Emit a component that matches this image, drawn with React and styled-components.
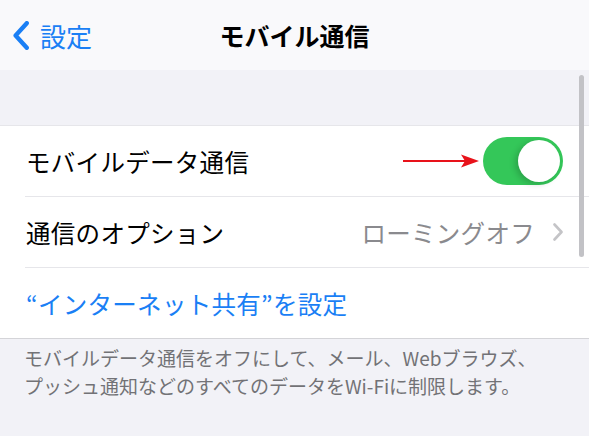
import React from 'react'
import styled, { createGlobalStyle } from 'styled-components'

const GlobalStyle = createGlobalStyle`
  html, body {
    margin: 0;
    padding: 0;
    background: #f2f2f7;
    font-family: "Noto Sans CJK JP", "Noto Sans", sans-serif;
  }
`

const Screen = styled.div`
  position: relative;
  width: 589px;
  height: 436px;
  overflow: hidden;
  background: #f2f2f7;
`

const NavBar = styled.div`
  height: 70px;
  background: #f9f9fb;
  display: grid;
  grid-template-columns: 1fr auto 1fr;
  align-items: center;
  padding: 0 13px;
`

const BackButton = styled.div`
  display: flex;
  align-items: center;
  gap: 11px;
  color: #1a7ff5;
  font-size: 26px;
`

const NavTitle = styled.div`
  font-size: 25px;
  font-weight: 700;
  color: #000;
`

const Spacer = styled.div`
  height: 55px;
`

const Group = styled.div`
  background: #fff;
  border-top: 1px solid #e6e6ea;
  border-bottom: 1px solid #d4d4d8;
`

const Row = styled.div`
  height: 70px;
  display: flex;
  align-items: center;
  padding: 0 26px 0 26px;

  & + & {
    border-top: 1px solid #e6e6ea;
    margin-left: 25px;
    padding-left: 1px;
  }
`

const Label = styled.div`
  flex: 1;
  font-size: 24.5px;
  color: ${p => (p.$link ? '#1a7ff5' : '#000')};
  letter-spacing: 0.3px;
`

const Detail = styled.div`
  font-size: 24.5px;
  color: #8a8a8e;
  margin-right: 18px;
  letter-spacing: 0.3px;
`

const Toggle = styled.div`
  width: 80px;
  height: 48px;
  border-radius: 24px;
  background: #34c759;
  position: relative;
  margin-left: 4px;
`

const Knob = styled.div`
  position: absolute;
  top: 3px;
  right: 3px;
  width: 42px;
  height: 42px;
  border-radius: 50%;
  background: #fff;
  box-shadow: -3px 2px 6px rgba(0, 0, 0, 0.18);
`

const Footer = styled.div`
  padding: 5px 24px 0 24px;
  font-size: 19px;
  line-height: 28px;
  color: #727276;
`

const ScrollBar = styled.div`
  position: absolute;
  right: 5px;
  top: 75px;
  width: 5px;
  height: 182px;
  border-radius: 3px;
  background: #c2c2c6;
`

const Chevron = ({ size = 30, color, width = 3 }) => (
  <svg width={size * 0.55} height={size} viewBox="0 0 11 20">
    <path d="M9.5 1.5 L1.8 10 L9.5 18.5" fill="none" stroke={color} strokeWidth={width} strokeLinecap="round" strokeLinejoin="round" />
  </svg>
)

const RightChevron = () => (
  <svg width="10" height="18" viewBox="0 0 10 18">
    <path d="M1.5 1.5 L8.5 9 L1.5 16.5" fill="none" stroke="#c4c4c7" strokeWidth="2.6" strokeLinecap="round" strokeLinejoin="round" />
  </svg>
)

const Arrow = () => (
  <svg width="76" height="14" viewBox="0 0 76 14">
    <line x1="0" y1="7" x2="62" y2="7" stroke="#e8121a" strokeWidth="2" />
    <path d="M58 0.5 L76 7 L58 13.5 L62 7 Z" fill="#e8121a" />
  </svg>
)

export default function App () {
  return (
    <Screen>
      <GlobalStyle />
      <NavBar>
        <BackButton>
          <Chevron size={29} color="#1a7ff5" width={3} />
          <span>設定</span>
        </BackButton>
        <NavTitle>モバイル通信</NavTitle>
        <div />
      </NavBar>

      <Spacer />

      <Group>
        <Row>
          <Label>モバイルデータ通信</Label>
          <Arrow />
          <Toggle>
            <Knob />
          </Toggle>
        </Row>
        <Row>
          <Label>通信のオプション</Label>
          <Detail>ローミングオフ</Detail>
          <RightChevron />
        </Row>
        <Row>
          <Label $link>“インターネット共有”を設定</Label>
        </Row>
      </Group>

      <Footer>
        モバイルデータ通信をオフにして、メール、Webブラウズ、<br />
        プッシュ通知などのすべてのデータをWi-Fiに制限します。
      </Footer>

      <ScrollBar />
    </Screen>
  )
}
